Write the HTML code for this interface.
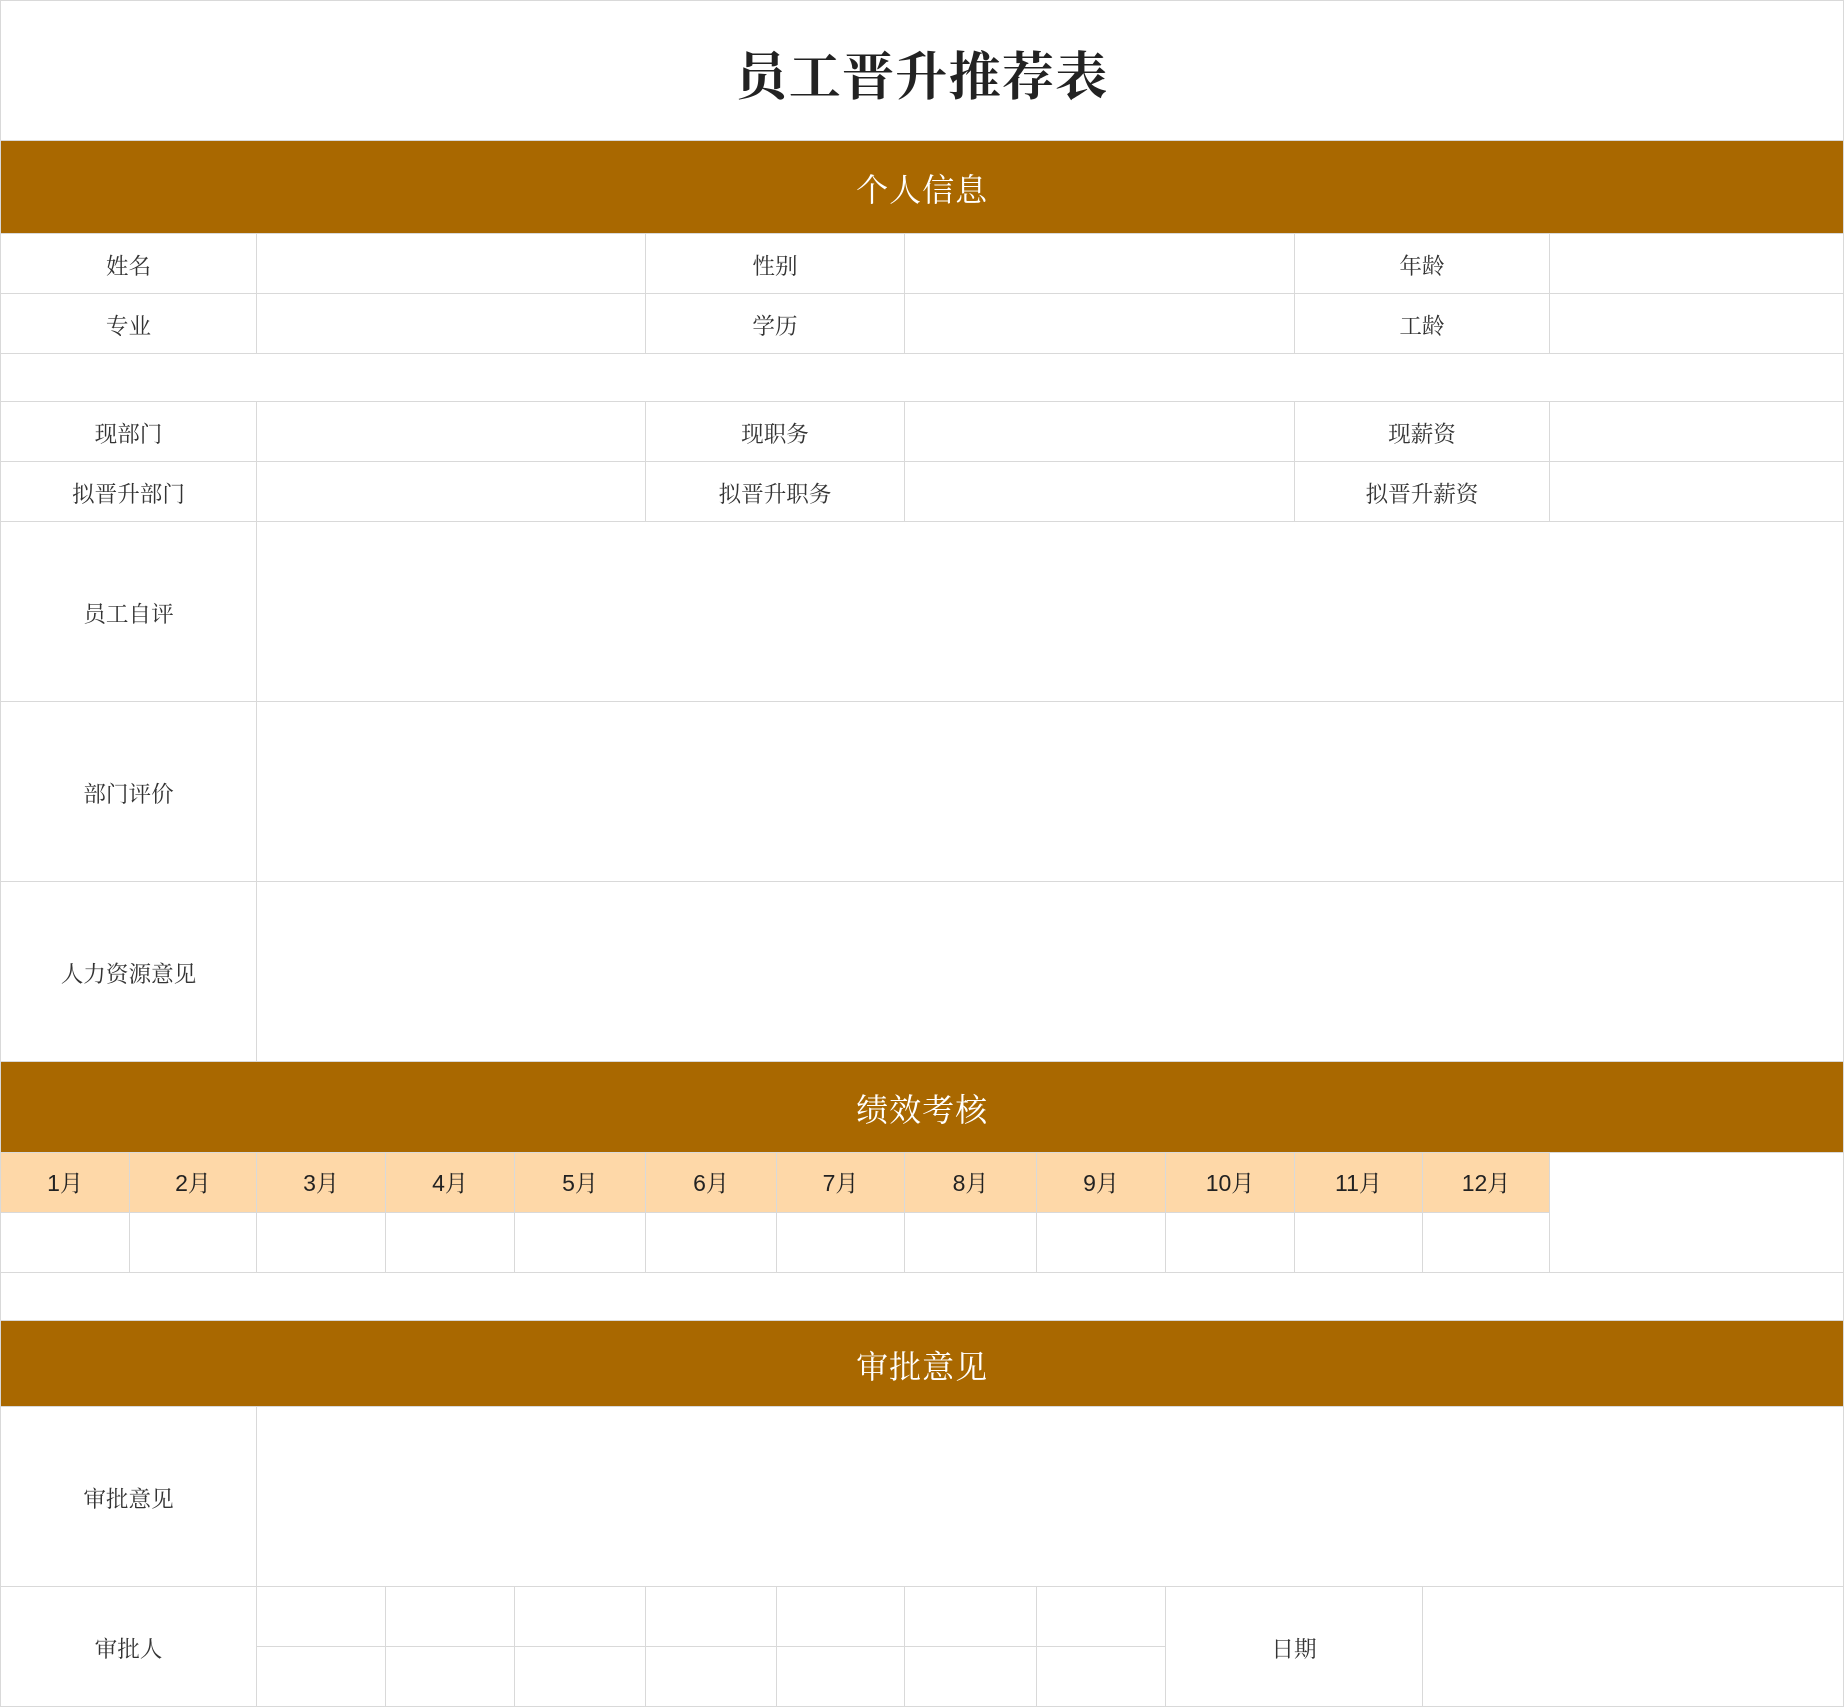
<!DOCTYPE html>
<html lang="zh-CN">
<head>
<meta charset="utf-8">
<title>员工晋升推荐表</title>
<style>
html,body{margin:0;padding:0;background:#fff;width:1844px;height:1708px;overflow:hidden}
table{border-collapse:separate;border-spacing:0;table-layout:fixed;width:1844px;border-left:1px solid #d9d9d9;border-top:1px solid #d9d9d9;font-family:"Liberation Serif","Noto Serif CJK SC",serif;position:absolute;left:0;top:0;box-sizing:border-box}
td{border-right:1px solid #d9d9d9;border-bottom:1px solid #d9d9d9;padding:7px 0 0;text-align:center;vertical-align:middle;font-size:22.6px;letter-spacing:0;color:#333;line-height:28px;box-sizing:border-box;overflow:hidden}
td.title{font-size:52px;font-weight:700;letter-spacing:1.3px;color:#222;line-height:60px;padding-top:16px}
td.band{background:#a96800;color:#fff;font-size:32px;letter-spacing:1px;line-height:40px;padding-top:6px}
td.mon{background:#fed8a8;color:#222;font-family:"Liberation Sans","Noto Serif CJK SC",sans-serif;font-size:23px;letter-spacing:0;padding-top:0}
</style>
</head>
<body>
<table>
<colgroup>
<col style="width:129px"><col style="width:127px"><col style="width:129px"><col style="width:129px"><col style="width:131px"><col style="width:131px"><col style="width:128px"><col style="width:132px"><col style="width:129px"><col style="width:129px"><col style="width:128px"><col style="width:127px"><col style="width:294px">
</colgroup>
<tr style="height:140px"><td class="title" colspan="13">员工晋升推荐表</td></tr>
<tr style="height:93px"><td class="band" colspan="13">个人信息</td></tr>
<tr style="height:60px"><td colspan="2">姓名</td><td colspan="3"></td><td colspan="2">性别</td><td colspan="3"></td><td colspan="2">年龄</td><td></td></tr>
<tr style="height:60px"><td colspan="2">专业</td><td colspan="3"></td><td colspan="2">学历</td><td colspan="3"></td><td colspan="2">工龄</td><td></td></tr>
<tr style="height:48px"><td colspan="13"></td></tr>
<tr style="height:60px"><td colspan="2">现部门</td><td colspan="3"></td><td colspan="2">现职务</td><td colspan="3"></td><td colspan="2">现薪资</td><td></td></tr>
<tr style="height:60px"><td colspan="2">拟晋升部门</td><td colspan="3"></td><td colspan="2">拟晋升职务</td><td colspan="3"></td><td colspan="2">拟晋升薪资</td><td></td></tr>
<tr style="height:180px"><td colspan="2">员工自评</td><td colspan="11"></td></tr>
<tr style="height:180px"><td colspan="2">部门评价</td><td colspan="11"></td></tr>
<tr style="height:180px"><td colspan="2">人力资源意见</td><td colspan="11"></td></tr>
<tr style="height:91px"><td class="band" colspan="13">绩效考核</td></tr>
<tr style="height:60px"><td class="mon">1月</td><td class="mon">2月</td><td class="mon">3月</td><td class="mon">4月</td><td class="mon">5月</td><td class="mon">6月</td><td class="mon">7月</td><td class="mon">8月</td><td class="mon">9月</td><td class="mon">10月</td><td class="mon">11月</td><td class="mon">12月</td><td rowspan="2"></td></tr>
<tr style="height:60px"><td></td><td></td><td></td><td></td><td></td><td></td><td></td><td></td><td></td><td></td><td></td><td></td></tr>
<tr style="height:48px"><td colspan="13"></td></tr>
<tr style="height:86px"><td class="band" colspan="13">审批意见</td></tr>
<tr style="height:180px"><td colspan="2">审批意见</td><td colspan="11"></td></tr>
<tr style="height:60px"><td colspan="2" rowspan="2">审批人</td><td></td><td></td><td></td><td></td><td></td><td></td><td></td><td colspan="2" rowspan="2">日期</td><td colspan="2" rowspan="2"></td></tr>
<tr style="height:60px"><td></td><td></td><td></td><td></td><td></td><td></td><td></td></tr>
</table>
</body>
</html>
